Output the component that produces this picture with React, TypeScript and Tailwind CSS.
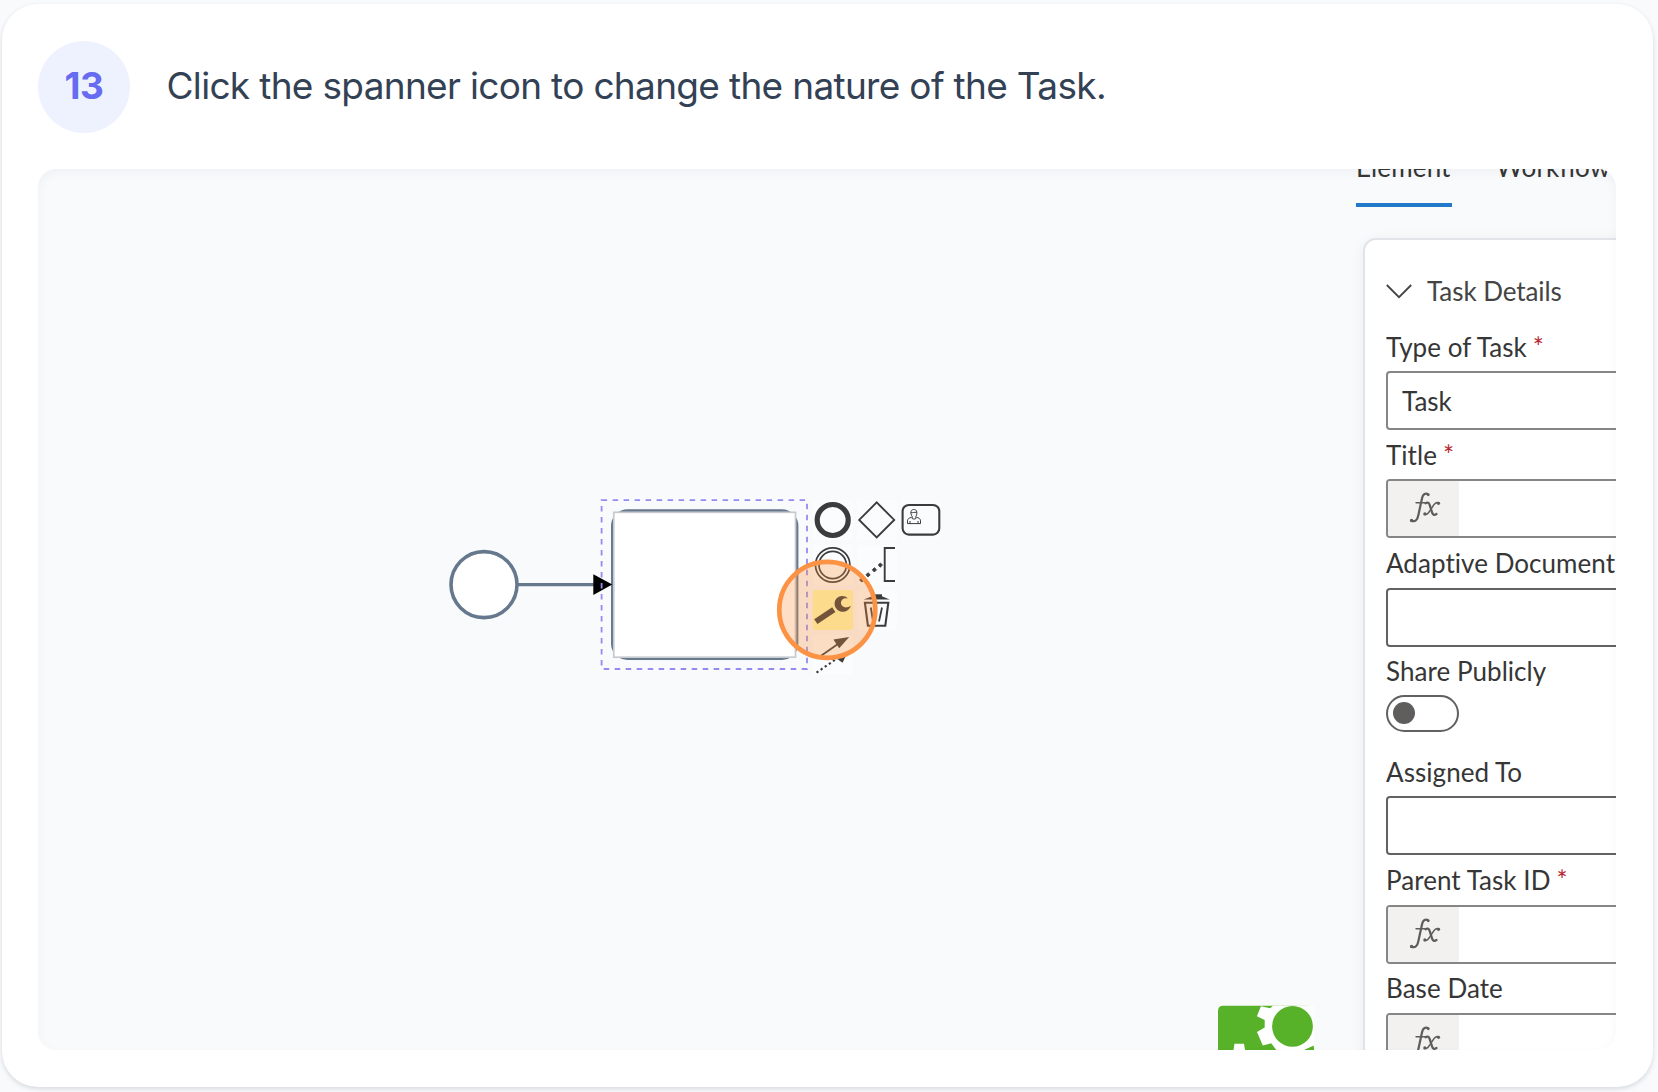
import type { ReactNode } from "react";

function Label({ children, required }: { children: ReactNode; required?: boolean }) {
  return (
    <div className="flex h-[49.2px] items-center whitespace-nowrap text-[26px] leading-none tracking-[0.05px] text-[#363636] [font-variant-ligatures:none]">
      {children}
      {required && <span className="ml-[6px] text-[26px] text-[#b3262e]">*</span>}
    </div>
  );
}

function Field({ fx, dark, value }: { fx?: boolean; dark?: boolean; value?: string }) {
  return (
    <div
      className={`flex h-[59px] w-[260px] items-stretch overflow-hidden rounded-[4px] border-2 bg-white ${
        dark ? "border-[#626262]" : "border-[#868686]"
      }`}
    >
      {fx && (
        <div className="flex w-[71px] items-center justify-center bg-[#f2f1f0] pb-px">
          <svg width="36" height="36" viewBox="0 0 34 34" fill="none" stroke="#5d5d5d" strokeLinecap="round">
            <path d="M21 4.2c-2.4-2-5-.2-5.8 3.300l-3.600 16.500c-.8 4-2.800 6.500-6.500 5" strokeWidth="2.100" />
            <path d="M9.500 12h8.500" strokeWidth="1.400" />
            <path d="M18.500 12.500c2-1.300 3.200-.3 3.900 1.800l2.200 6.900c.7 2.200 2 3 4.200 1.500" strokeWidth="2.100" />
            <path d="M31 12c-2.500-1-4 .6-5.500 3.100l-3 4.700c-1.500 2.500-3 4.100-5 3.100" strokeWidth="1.400" />
            <circle cx="21" cy="4.600" r="1.300" fill="#5d5d5d" stroke="none" />
            <circle cx="5.300" cy="28.800" r="1.600" fill="#5d5d5d" stroke="none" />
            <circle cx="30.700" cy="12.600" r="1.500" fill="#5d5d5d" stroke="none" />
            <circle cx="17.800" cy="22.600" r="1.500" fill="#5d5d5d" stroke="none" />
          </svg>
        </div>
      )}
      {value && (
        <span className="flex items-center pl-[14px] pt-px text-[26px] leading-none text-[#363636]">{value}</span>
      )}
    </div>
  );
}

function Diagram() {
  return (
    <svg className="block h-full w-full" viewBox="38 169 1302 881" fill="none">
      {/* Start event and sequence flow */}
      <circle cx="484" cy="584.6" r="33" fill="#fff" stroke="#66788d" strokeWidth="3.6" />
      <path d="M518 584.600H595" stroke="#66788d" strokeWidth="3.400" />

      {/* Task with its inline editor box */}
      <rect x="612.700" y="511" width="184" height="147.300" rx="15" fill="#fff" stroke="#66788d" strokeWidth="3.400" />
      <path d="M593.300 574.200l19 10.400-19 10.400z" fill="#000" />
      <rect x="613.800" y="512.300" width="181.700" height="144.900" fill="#fff" stroke="#c6cace" strokeWidth="1.700" />
      <path
        d="M601.600 500.200H807V669H601.600Z"
        stroke="#938cf0"
        strokeWidth="1.800"
        strokeDasharray="5.500 5.500"
      />

      {/* Context pad */}
      <g fill="#fff" fillOpacity=".4">
        <rect x="813" y="500" width="40" height="40" rx="3" />
        <rect x="857" y="500" width="40" height="40" rx="3" />
        <rect x="901" y="500" width="40" height="40" rx="3" />
        <rect x="813" y="545" width="40" height="40" rx="3" />
        <rect x="857" y="545" width="40" height="40" rx="3" />
        <rect x="857" y="590" width="40" height="40" rx="3" />
        <rect x="813" y="635" width="40" height="40" rx="3" />
      </g>
      <rect x="812.700" y="590" width="40.300" height="40" rx="3" fill="#fefaae" />
      <g stroke="#3c3c3c">
        <circle cx="832.700" cy="520" r="15.500" strokeWidth="5.200" />
        <path d="M876.700 502.400l17.500 17.500-17.500 17.500-17.500-17.500z" strokeWidth="1.900" />
        <rect x="902.600" y="505" width="36.700" height="29.600" rx="6.300" strokeWidth="2.100" />
        <g strokeWidth="1">
          <path d="M911.600 517.300c-2.700.5-4.100 1.700-4.100 3.600v2.700h13v-2.700c0-1.900-1.400-3.100-4.100-3.600" />
          <path d="M912.200 518.500c1.300.8 2.400.8 3.700 0v-2.200c1.300-1.600 1.500-5.700-.4-6.500-3.200-1-5 .7-4.600 3.600.2 1.300.6 2.300 1.300 2.900zM910.800 512.600c2.100.6 3.700-1 5.700 0M910 521v2.600M918 521v2.600" />
        </g>
        <circle cx="832.700" cy="565" r="17.200" strokeWidth="1.700" />
        <circle cx="832.700" cy="565" r="13.700" strokeWidth="1.700" />
        <path d="M895 548h-10.300v33h10.300" strokeWidth="1.900" />
      </g>
      <g fill="#3c3c3c">
        <path d="M880.300 563l2.200 2-2.200 2.200-2-2.200zM874.300 567.700l2.200 2.100-2.200 2.200-2-2.200zM868 572.700l2.200 2.100-2.200 2.200-2-2.200zM861.700 577.800l2.200 2.100-2.200 2.200-2-2.200z" stroke="#3c3c3c" strokeWidth=".9" />
        <path d="M863.700 599.500l11.600-4.500h6.500v1.200l8 3.300z" />
        <path d="M875 594.300h7v2.500h-7z" />
      </g>
      <g stroke="#3c3c3c">
        <path d="M864.900 602.800h23.400l-3 22.900h-17.400z" strokeWidth="2.100" />
        <path d="M870.800 607.500l2.300 14M875.800 607.500v0M882 607.500l-3 14" strokeWidth="1.800" />
      </g>

      {/* Wrench */}
      <path d="M815.800 621.600l18-12" stroke="#3c3c3c" strokeWidth="5.800" />
      <path
        d="M847.800 598.500c-3.200-3.500-8.900-3.200-11.700.6-2.500 3.400-1.800 8.200 1.500 10.900 4.300 3.500 11.500 1.600 13.200-4.300-2.800 1.800-6 2.400-8.200.6-2.200-1.700-2.200-4.700-.4-6.500 1.500-1.500 3.400-1.700 5.600-1.300z"
        fill="#3c3c3c"
      />

      {/* Connect tool */}
      <path d="M817.500 658.200l21.500-14.900" stroke="#3c3c3c" strokeWidth="1.800" />
      <path d="M849.200 637l-10 11.200-5.800-8.800z" fill="#3c3c3c" />
      <path d="M816.500 672.600l21.500-14.800" stroke="#3c3c3c" strokeWidth="2.100" strokeDasharray="2.300 2.700" />
      <path d="M848 651.500l-5.500 11.200-9-6.500z" fill="#3c3c3c" />

      {/* Click highlight */}
      <circle cx="827.300" cy="609.800" r="48" fill="#fb923c" fillOpacity=".29" stroke="#fb9244" strokeWidth="4.700" />

      {/* Product mark with gears */}
      <path d="M1218 1050v-39q0-5.300 5.300-5.300H1308q6 0 6 5.300v39z" fill="#57b229" />
      <path d="M1273 1005.700h41v41.500l-8.300 2.800h-29.400l-5.100-6.700-8.400 2.300-5.800-13.600 7.700-4.400v-7.600l-7.800-3.800 4-9.900 9.300 2z" fill="#fff" />
      <path d="M1279 1005.500h35.500v34.500l-6 6c4-6 5.500-11 5.500-20 0-12-8-20.500-21-20.500z" fill="#fbfdfc" />
      <circle cx="1292.500" cy="1026.400" r="20.400" fill="#57b229" />
      <path d="M1304 1050l9.700-4.500v4.500z" fill="#57b229" />
      <path d="M1233.500 1050l1-6.200h9.500l1 6.200z" fill="#fff" />
    </svg>
  );
}

export default function App() {
  return (
    <div className="h-[1092px] w-full overflow-hidden bg-[#f8fafc] pl-[2px] pt-[4px] font-['Inter',sans-serif]">
      <main className="flex h-[1083px] w-[1651px] flex-col rounded-[36px] bg-white px-[36px] pb-[36px] pt-[37px] shadow-[0_2px_5px_rgba(15,23,42,0.14)]">
        <header className="flex h-[92px] shrink-0 items-center">
          <div className="flex size-[92px] items-center justify-center rounded-full bg-[#eef2ff] pb-[2px] text-[37px] font-bold tracking-[-0.4px] text-[#666bf1]">
            13
          </div>
          <h1 className="ml-[36.500px] whitespace-nowrap pb-[2px] text-[37px] tracking-[-0.68px] text-[#334155]">
            Click the spanner icon to change the nature of the Task.
          </h1>
        </header>

        <section className="relative mt-[36px] flex h-[881px] w-[1578px] shrink-0 overflow-hidden rounded-[18px] bg-[#f8fafc] font-['Lato',sans-serif]">
          <div className="w-[1302px] shrink-0">
            <Diagram />
          </div>
          <aside className="flex w-[276px] shrink-0 flex-col pl-[16px]">
            <nav className="flex h-[38px] shrink-0 gap-[44px] text-[26px] leading-none tracking-[0.15px] text-[#363636]">
              <div className="flex w-[96px] flex-col justify-between border-b-4 border-[#2379c9]">
                <span className="-mt-[15px]">Element</span>
              </div>
              <span className="-mt-[15px] [font-variant-ligatures:none]">Workflow</span>
            </nav>
            <div className="ml-[7px] mt-[31px] h-[860px] w-[300px] shrink-0 rounded-tl-[13px] border-2 border-[#e0e3e7] bg-white pl-[21px] shadow-[0_2px_14px_rgba(15,23,42,0.06)]">
              <div className="mt-[25px] flex h-[57px] items-start pt-[13px] text-[26px] leading-none text-[#444]">
                <svg className="mt-[6px]" width="26" height="15" viewBox="0 0 26 15" fill="none" stroke="#444" strokeWidth="1.800">
                  <path d="M.8 1l12.200 12.200L25.200 1" />
                </svg>
                <span className="ml-[15px] tracking-[-0.06px]">Task Details</span>
              </div>
              <Label required>Type of Task</Label>
              <Field value="Task" />
              <Label required>Title</Label>
              <Field fx />
              <Label>Adaptive Document</Label>
              <Field dark />
              <Label>Share Publicly</Label>
              <div className="-mt-px flex h-[37px] w-[73px] items-center rounded-full border-2 border-[#616161] bg-white pl-[5px]">
                <span className="size-[22px] rounded-full bg-[#5f5e5d]" />
              </div>
              <div className="h-[15.500px]" />
              <Label>Assigned To</Label>
              <Field dark />
              <Label required>Parent Task ID</Label>
              <Field fx />
              <Label>Base Date</Label>
              <Field fx />
            </div>
          </aside>
          <div className="pointer-events-none absolute inset-0 rounded-[18px] shadow-[inset_0_4px_12px_rgba(15,23,42,0.04)]" />
        </section>
      </main>
    </div>
  );
}
